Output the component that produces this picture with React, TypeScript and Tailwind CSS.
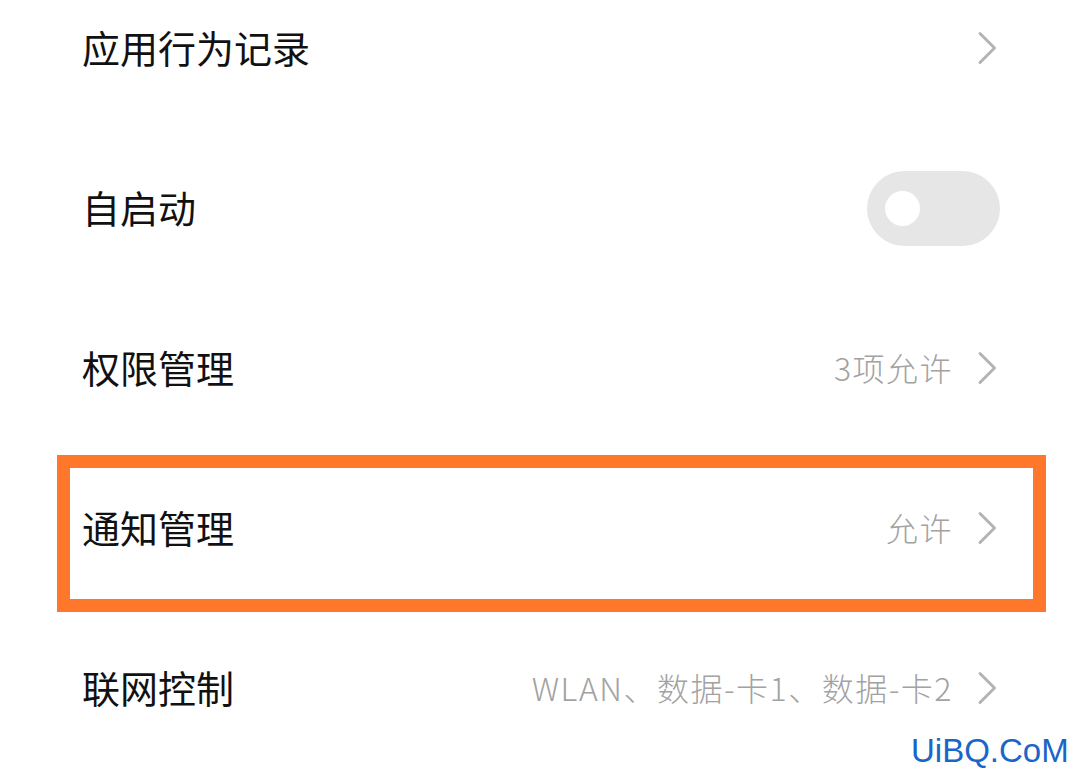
import type { ReactNode } from "react";

const cjk = { fontFamily: '"Noto Sans CJK SC", "Noto Sans", sans-serif' };

function Chevron() {
    return (
        <svg width="20" height="34" viewBox="0 0 20 34" fill="none" className="shrink-0">
            <path d="M3 2.5 L17.5 17 L3 31.5" stroke="#b4b4b4" strokeWidth="3" strokeLinecap="round" strokeLinejoin="round" />
        </svg>
    );
}

function Toggle() {
    return (
        <div className="w-[133px] h-[75px] rounded-full bg-[#e6e6e6] flex items-center pl-[18px] mr-[-3px]">
            <div className="w-[35px] h-[35px] rounded-full bg-white" />
        </div>
    );
}

type RowProps = {
    title: string;
    value?: string;
    right?: ReactNode;
    highlight?: boolean;
};

function Row({ title, value, right, highlight }: RowProps) {
    return (
        <div className="relative h-[160px] flex items-center justify-between pl-[82px] pr-[83px]">
            <span className="text-[38px] text-[#111111] leading-none -mt-[3px]" style={cjk}>
                {title}
            </span>
            <div className="flex items-center gap-[24px]">
                {value && (
                    <span className="text-[32px] font-light tracking-[1.5px] text-[#a2a2a2] leading-none -mt-[2px]" style={cjk}>
                        {value}
                    </span>
                )}
                {right ?? <Chevron />}
            </div>
            {/* annotation box */}
            {highlight && (
                <div className="absolute left-[57px] right-[34px] top-[7px] bottom-[-4px] border-[13px] border-[#ff772b] pointer-events-none" />
            )}
        </div>
    );
}

export default function App() {
    const rows: RowProps[] = [
        { title: "应用行为记录" },
        { title: "自启动", right: <Toggle /> },
        { title: "权限管理", value: "3项允许" },
        { title: "通知管理", value: "允许", highlight: true },
        { title: "联网控制", value: "WLAN、数据-卡1、数据-卡2" }
    ];

    return (
        <div className="relative w-[1080px] h-[779px] bg-white overflow-hidden">
            <div className="-mt-[32px]">
                {rows.map((row, index) => (
                    <Row key={index} {...row} />
                ))}
            </div>

            <span
                className="absolute left-[911px] top-[734px] text-[33px] leading-none text-[#1a66c8]"
                style={{ fontFamily: '"Liberation Sans", Arial, sans-serif' }}
            >
                UiBQ.CoM
            </span>
        </div>
    );
}
